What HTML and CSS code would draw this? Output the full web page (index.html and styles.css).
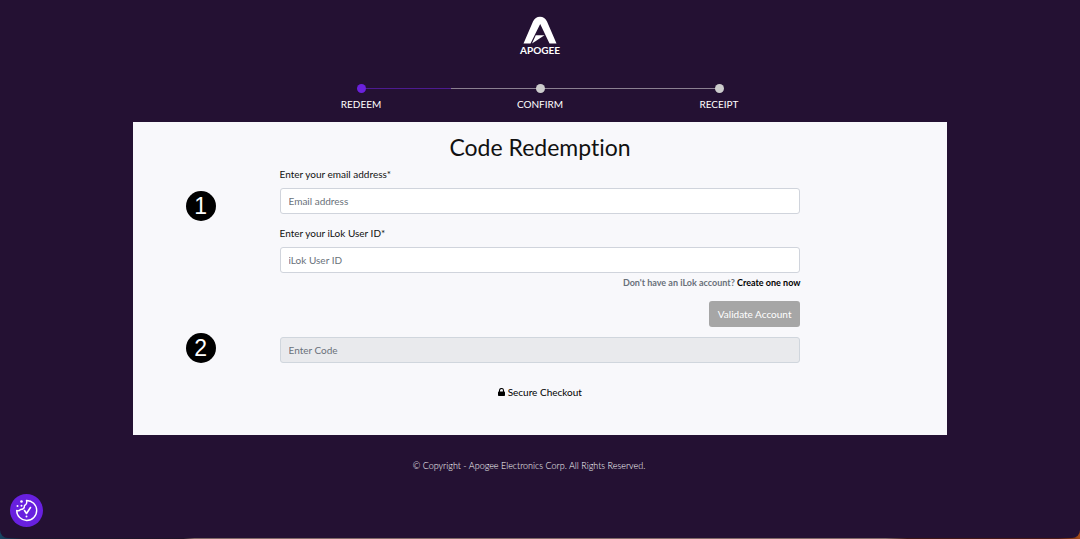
FILE: index.html
```html
<!DOCTYPE html>
<html lang="en">
<head>
<meta charset="utf-8">
<meta name="viewport" content="width=device-width, initial-scale=1">
<title>Code Redemption</title>
<link rel="stylesheet" href="styles.css">
</head>
<body>
<div class="window">
  <header class="brand">
    <svg class="brand-mark" viewBox="0 0 34 28" aria-hidden="true">
      <path fill="#fff" d="M.500 27.500 10 5.500Q12.200 .800 17 .800T24 5.500L33.500 27.500H26.500L17.200 8 7.500 27.500Z"/>
      <path fill="#fff" d="M12.800 19.200H21.500L9 27.500Z"/>
    </svg>
    <span class="brand-name">APOGEE</span>
  </header>
  <ol class="steps">
    <li class="step step-active">REDEEM</li>
    <li class="step">CONFIRM</li>
    <li class="step">RECEIPT</li>
  </ol>
  <main class="card">
    <h1 class="title">Code Redemption</h1>
    <form class="form">
      <span class="badge">1</span>
      <div class="fields">
        <label class="label" for="email">Enter your email address*</label>
        <input class="input" id="email" type="email" placeholder="Email address">
        <label class="label label-next" for="ilok">Enter your iLok User ID*</label>
        <input class="input" id="ilok" type="text" placeholder="iLok User ID">
        <p class="hint">Don't have an iLok account? <a class="link" href="#">Create one now</a></p>
        <button class="button" type="button" disabled>Validate Account</button>
      </div>
      <span class="badge badge-code">2</span>
      <div class="fields">
        <input class="input" type="text" placeholder="Enter Code" aria-label="Enter Code" disabled>
      </div>
    </form>
    <p class="secure">
      <svg class="lock" viewBox="0 0 7 8" aria-hidden="true"><rect y="3.500" width="7" height="4.500" rx=".8"/><path d="M1.500 4V2.500a2 2 0 0 1 4 0V4" fill="none" stroke="#000" stroke-width="1.100"/></svg>
      Secure Checkout
    </p>
  </main>
  <footer class="footer">© Copyright - Apogee Electronics Corp. All Rights Reserved.</footer>
</div>
<button class="cookie" type="button" aria-label="Cookie settings">
  <svg class="cookie-icon" viewBox="0 0 33 33" aria-hidden="true">
    <g fill="none" stroke="#fff" stroke-width="1.400" stroke-linecap="round" stroke-linejoin="round">
      <path d="M16.500 6.500A10 10 0 1 1 6.700 16.500Q9 17.500 10.500 15.500 14.500 15.500 14.500 11.500 17.500 10 16.500 6.500Z"/>
      <path d="M14.500 16.500 16.500 19.500 20.500 13.500" stroke-width="1.600"/>
    </g>
    <g fill="#fff"><circle cx="11.500" cy="7.500" r="1.300"/><circle cx="7.500" cy="12" r="1"/><circle cx="11.500" cy="11.800" r="1"/><circle cx="16.500" cy="22.500" r="1"/></g>
  </svg>
</button>
</body>
</html>
```
FILE: styles.css
```css
* { box-sizing: border-box; }

body {
  margin: 0;
  min-height: 100vh;
  padding-bottom: 1px;
  display: flex;
  background: linear-gradient(90deg, #174563 0, #1c1830 2%, #201427 17%, #806a68 18%, #806a68 82%, #3b1718 84%, #4a1a18 98%, #a64b16 100%);
  font-family: Lato, "Open Sans", sans-serif;
  font-size: 10px;
  line-height: 16px;
  font-variant-ligatures: none;
}

.window {
  isolation: isolate;
  flex: 1;
  display: flex;
  flex-direction: column;
  align-items: center;
  padding-top: 16px;
  background: #241133;
  border-radius: 0 0 8px 8px;
}

.brand {
  display: flex;
  flex-direction: column;
  align-items: center;
}

.brand-mark { width: 34px; height: 28px; }

.brand-name {
  color: #fff;
  font-size: 10px;
  font-weight: 700;
  line-height: 12px;
}

.steps {
  display: grid;
  grid-template-columns: repeat(3, 1fr);
  width: 50%;
  max-width: 537px;
  margin: 28px 0 10px;
  padding: 0;
  list-style: none;
  color: #fff;
  text-align: center;
}

.step { position: relative; }

.step::before {
  content: "";
  display: block;
  width: 9px;
  height: 9px;
  margin: 0 auto 3px;
  border-radius: 50%;
  background: #ccc;
}

.step::after {
  content: "";
  position: absolute;
  z-index: -1;
  top: 4px;
  left: 0;
  width: 100%;
  height: 1px;
  background: #8b8091;
}

.step:last-child::after { width: 50%; }
.step-active::before { background: #6b21dc; }
.step-active::after { left: 50%; width: 50%; background: #4d1b91; }

.card {
  width: 76%;
  max-width: 814px;
  padding: 10px 0 35px;
  background: #f8f8fb;
  color: #111;
}

.title {
  margin: 0 0 4px;
  font-size: 23px;
  font-weight: 400;
  line-height: 30px;
  text-align: center;
}

.form {
  display: grid;
  grid-template-columns: 18% 64% 18%;
  row-gap: 10px;
}

.badge {
  grid-column: 1;
  justify-self: center;
  width: 30px;
  height: 30px;
  margin: 25px 11px 0 0;
  border-radius: 50%;
  background: #000;
  color: #fff;
  font: 23px/30px "Liberation Sans", Arial, sans-serif;
  text-align: center;
}

.badge-code { margin-top: -4px; margin-bottom: -4px; }

.fields {
  grid-column: 2;
  display: flex;
  flex-direction: column;
}

.label { margin-bottom: 6px; }
.label-next { margin-top: 11px; }

.input {
  width: 100%;
  height: 26px;
  padding: 0 8px;
  border: 1px solid #d0d4dc;
  border-radius: 3px;
  background: #fff;
  font: inherit;
}

.input::placeholder { color: #69717a; opacity: 1; }
.input:disabled { background: #e9eaed; border-color: #d0d6dd; }

.hint {
  margin: 2px 0 10px;
  color: #69717a;
  font-size: 9px;
  font-weight: 700;
  text-align: right;
}

.link { color: #000; text-decoration: none; }

.button {
  align-self: flex-end;
  height: 26px;
  padding: 0 9px;
  border: 0;
  border-radius: 3px;
  background: #a6a6a6;
  color: #fff;
  font: inherit;
}

.secure {
  margin: 21px 0 0;
  color: #000;
  text-align: center;
}

.lock { width: 7px; height: 8px; }

.footer {
  margin: 23px 22px 0 0;
  color: #fff;
  font-size: 9px;
  font-weight: 300;
}

.cookie {
  position: fixed;
  left: 10px;
  bottom: 12px;
  width: 33px;
  height: 33px;
  padding: 0;
  border: 0;
  border-radius: 50%;
  background: #6820df;
}

.cookie-icon { display: block; }
```
